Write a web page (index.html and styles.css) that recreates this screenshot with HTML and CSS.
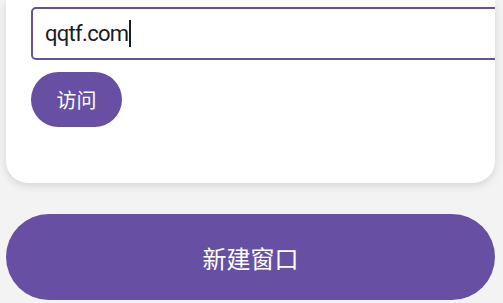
FILE: index.html
```html
<!DOCTYPE html>
<html lang="zh">
<head>
<meta charset="utf-8">
<link rel="stylesheet" href="styles.css">
</head>
<body>
<div class="page">
  <div class="card">
    <div class="field"><span class="value">qqtf.com</span><span class="caret"></span></div>
    <button class="visit">访问</button>
  </div>
  <button class="newwin">新建窗口</button>
</div>
</body>
</html>
```
FILE: styles.css
```css
html, body {
  margin: 0;
  padding: 0;
  background: #f3f3f3;
  width: 503px;
  height: 303px;
  overflow: hidden;
  font-family: Roboto, "Noto Sans CJK SC", sans-serif;
}
.page {
  display: flex;
  flex-direction: column;
  padding: 0 8px 0 6px;
}
.card {
  background: #ffffff;
  border-radius: 0 0 22px 22px;
  box-shadow: 0 3px 8px rgba(0, 0, 0, 0.12);
  padding: 7px 0 56px 25px;
  overflow: hidden;
  display: flex;
  flex-direction: column;
  align-items: flex-start;
}
.field {
  box-sizing: border-box;
  width: 480px;
  height: 53px;
  border: 2px solid #6750a4;
  border-radius: 5px;
  display: flex;
  align-items: center;
  padding-left: 12px;
  font-size: 22px;
  letter-spacing: -0.7px;
  color: #1c1b1f;
}
.caret {
  display: inline-block;
  width: 2px;
  height: 27px;
  background: #1c1b1f;
  margin-left: 1px;
}
.visit {
  margin-top: 12px;
  width: 91px;
  height: 55px;
  border: none;
  border-radius: 28px;
  background: #6750a4;
  color: #ffffff;
  font-family: "Noto Sans CJK SC", sans-serif;
  font-size: 20px;
  padding: 0;
}
.newwin {
  margin-top: 31px;
  height: 86px;
  width: 100%;
  border: none;
  border-radius: 43px;
  background: #6750a4;
  color: #ffffff;
  font-family: "Noto Sans CJK SC", sans-serif;
  font-size: 24px;
  padding: 0;
}
```
